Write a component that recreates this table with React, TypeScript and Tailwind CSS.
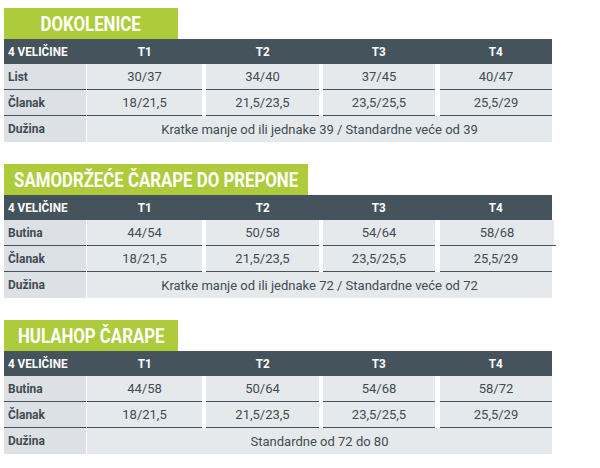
import React from "react";

type Section = {
  title: string;
  titleW: string;
  rows: [string, string[]][];
  dl: string;
  quirk?: boolean;
};

const sections: Section[] = [
  {
    title: "DOKOLENICE",
    titleW: "w-[174px]",
    rows: [
      ["List", ["30/37", "34/40", "37/45", "40/47"]],
      ["Članak", ["18/21,5", "21,5/23,5", "23,5/25,5", "25,5/29"]],
    ],
    dl: "Kratke manje od ili jednake 39 / Standardne veće od 39",
  },
  {
    title: "SAMODRŽEĆE ČARAPE DO PREPONE",
    titleW: "w-[304px]",
    rows: [
      ["Butina", ["44/54", "50/58", "54/64", "58/68"]],
      ["Članak", ["18/21,5", "21,5/23,5", "23,5/25,5", "25,5/29"]],
    ],
    dl: "Kratke manje od ili jednake 72 / Standardne veće od 72",
    quirk: true,
  },
  {
    title: "HULAHOP ČARAPE",
    titleW: "w-[174px]",
    rows: [
      ["Butina", ["44/58", "50/64", "54/68", "58/72"]],
      ["Članak", ["18/21,5", "21,5/23,5", "23,5/25,5", "25,5/29"]],
    ],
    dl: "Standardne od 72 do 80",
  },
];

const colW = ["w-[115px] ml-[1px]", "w-[113px] ml-[4px]", "w-[112px] ml-[4px]", "w-[112px] ml-[5px]"];

const font = { fontFamily: 'Roboto, "Liberation Sans", sans-serif' };

function Table({ s }: { s: Section }) {
  return (
    <div className="flex flex-col">
      <div
        className={`${s.titleW} h-[31px] bg-[#aecb3c] text-white font-bold text-[20px] flex items-center justify-center whitespace-nowrap pt-[1px]`}
      >
        <span className="inline-block scale-x-[0.84]">{s.title}</span>
      </div>
      <div className="flex h-[25px] w-[548px] bg-[#45535c] text-white font-bold text-[13px] items-center whitespace-nowrap">
        <div className="w-[82px] pl-[4px]">
          <span className="inline-block origin-left scale-x-[0.9]">4 VELIČINE</span>
        </div>
        {["T1", "T2", "T3", "T4"].map((t, i) => (
          <div key={t} className={`${colW[i]} text-center`}>
            <span className="inline-block scale-x-[0.9]">{t}</span>
          </div>
        ))}
      </div>
      {s.rows.map(([label, vals], ri) => (
        <div key={label} className="flex h-[26px] text-[#3f4b53] text-[13px]">
          <div className="w-[82px] pl-[4px] bg-[#dde1e5] border-b border-[#45535c] flex items-center font-bold">
            <span className="inline-block origin-left scale-x-[0.92]">{label}</span>
          </div>
          {vals.map((v, i) => {
            const q = s.quirk && i === 3;
            return (
              <div
                key={i}
                className={`${colW[i]} relative bg-[#e6e9ec] border-b border-[#45535c] flex items-center justify-center ${
                  q && ri === 0 ? "!w-[114px]" : ""
                }`}
              >
                <span className="pt-[1px]">{v}</span>
                {q && ri === 0 ? (
                  <div className="absolute right-[-2px] bottom-[-1px] h-[1px] w-[4px] bg-[#45535c]" />
                ) : null}
              </div>
            );
          })}
        </div>
      ))}
      <div className="flex h-[26px] text-[#3f4b53] text-[13px]">
        <div className="w-[82px] pl-[4px] bg-[#dde1e5] flex items-center font-bold">
          <span className="inline-block origin-left scale-x-[0.92]">Dužina</span>
        </div>
        <div className="w-[465px] ml-[1px] bg-[#e6e9ec] flex items-center justify-center whitespace-nowrap">
          <span className="pt-[1px]">{s.dl}</span>
        </div>
      </div>
    </div>
  );
}

export default function App() {
  return (
    <div className="w-[600px] h-[468px] bg-white pl-[4px] pt-[8px] flex flex-col gap-[22px]" style={font}>
      {sections.map((s) => (
        <Table key={s.title} s={s} />
      ))}
    </div>
  );
}
